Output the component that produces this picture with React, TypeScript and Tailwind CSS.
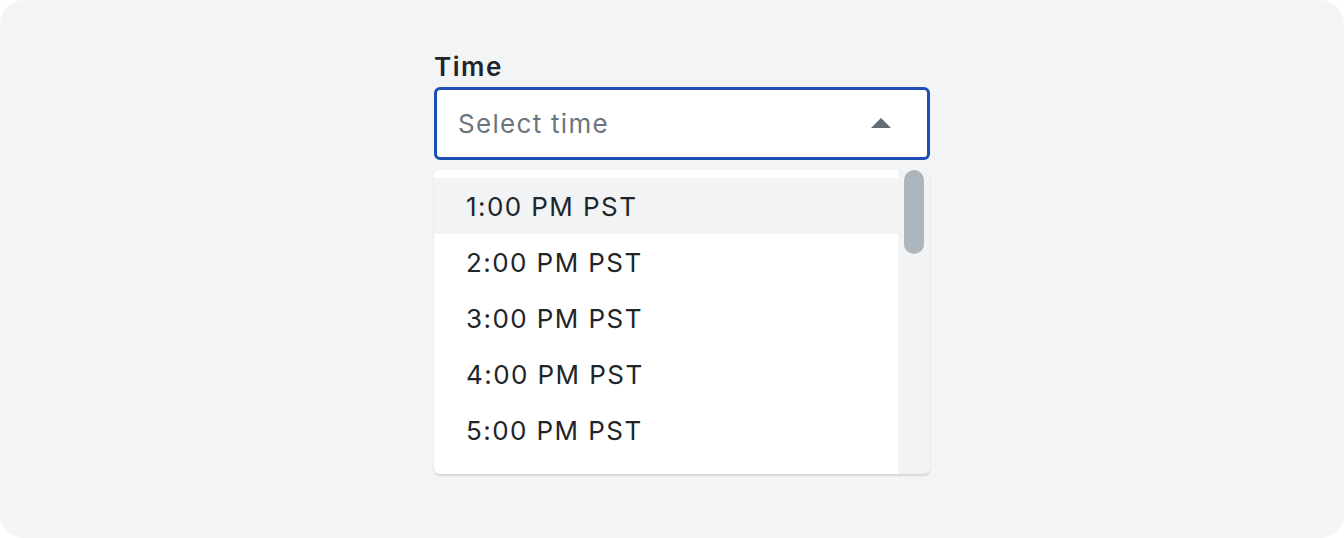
const times = ["1:00 PM PST", "2:00 PM PST", "3:00 PM PST", "4:00 PM PST", "5:00 PM PST"];

export default function App() {
  return (
    <div
      className="h-[538px] w-[1344px] overflow-hidden rounded-3xl bg-[#f3f4f6]"
      style={{ fontFamily: "Inter, 'Noto Sans', sans-serif" }}
    >
      <div className="flex justify-center pl-5 pt-[51px]">
        <div className="w-[496px]">
          <label className="block text-[26px] font-semibold leading-8 tracking-[0.06em] text-[#212529]">Time</label>

          <button
            type="button"
            className="mt-1 flex h-[73px] w-full items-center justify-between rounded-md border-[3px] border-[#1c4eb5] bg-white pl-[21px] pr-[36px]"
          >
            <span className="text-[26px] tracking-[0.05em] text-[#6c757d]">Select time</span>
            <svg width="20" height="10" viewBox="0 0 20 10" className="-mt-px">
              <path d="M10 0 L20 10 L0 10 Z" fill="#636d74" />
            </svg>
          </button>

          <div className="mt-[10px] flex h-[304px] overflow-hidden rounded-md bg-[#f1f3f5] shadow-[0_2px_2px_rgba(0,0,0,0.12)]">
            <ul className="w-[464px] bg-white pt-2">
              {times.map((t, i) => (
                <li
                  key={t}
                  className={`flex h-14 items-center pl-8 text-[26px] tracking-[0.055em] text-[#212529] ${i === 0 ? "bg-[#f1f3f5]" : ""}`}
                >
                  {t}
                </li>
              ))}
            </ul>
            <div className="flex-1 pl-[6px]">
              <div className="h-[84px] w-5 rounded-full bg-[#adb5bd]" />
            </div>
          </div>
        </div>
      </div>
    </div>
  );
}
